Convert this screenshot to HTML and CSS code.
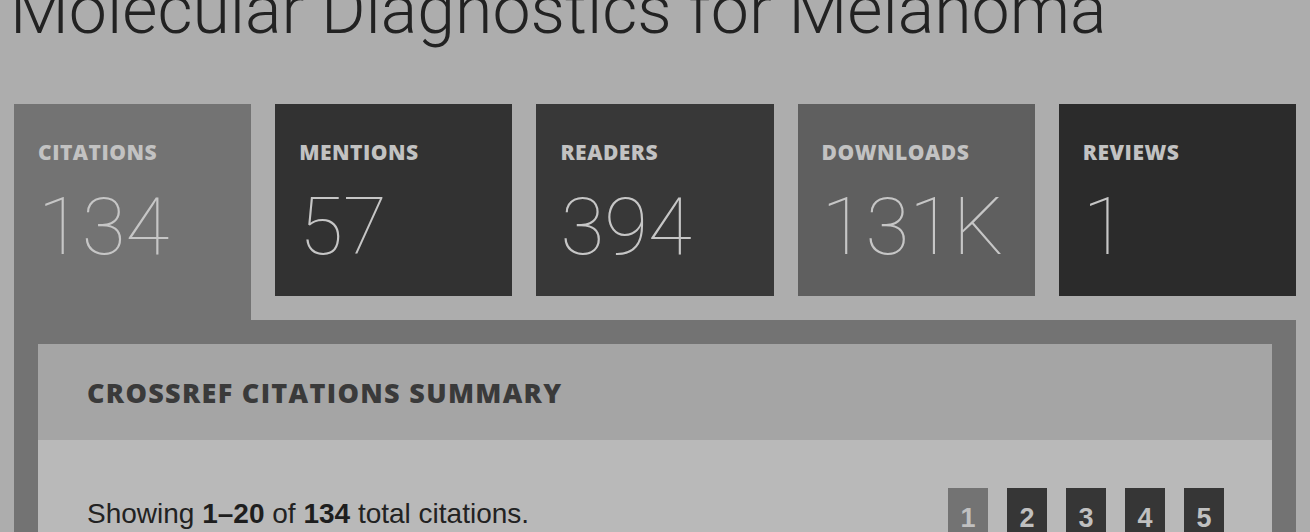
FILE: index.html
```html
<!DOCTYPE html>
<html lang="en">
<head>
<meta charset="utf-8">
<title>Molecular Diagnostics for Melanoma</title>
<link rel="stylesheet" href="styles.css">
</head>
<body>
<h1 class="title">Molecular Diagnostics for Melanoma</h1>
<div class="tabs">
  <div class="tab tab-active"><div class="tab-label">CITATIONS</div><div class="tab-num">134</div></div>
  <div class="tab tab-mentions"><div class="tab-label">MENTIONS</div><div class="tab-num">57</div></div>
  <div class="tab tab-readers"><div class="tab-label">READERS</div><div class="tab-num">394</div></div>
  <div class="tab tab-downloads"><div class="tab-label">DOWNLOADS</div><div class="tab-num">131K</div></div>
  <div class="tab tab-reviews"><div class="tab-label">REVIEWS</div><div class="tab-num">1</div></div>
</div>
<div class="panel">
  <div class="inner">
    <div class="inner-head">CROSSREF CITATIONS SUMMARY</div>
    <div class="inner-body">
      <div class="showing">Showing <b>1–20</b> of <b>134</b> total citations.</div>
      <div class="pager">
        <span class="page page-active">1</span>
        <span class="page">2</span>
        <span class="page">3</span>
        <span class="page">4</span>
        <span class="page">5</span>
      </div>
    </div>
  </div>
</div>
</body>
</html>
```
FILE: styles.css
```css
html, body {
  margin: 0;
  padding: 0;
  background: #adadad;
  overflow: hidden;
}
body {
  width: 1310px;
  height: 532px;
}
.title {
  margin: -30px 0 54px 10px;
  font-family: Roboto, "Liberation Sans", sans-serif;
  font-weight: 300;
  font-size: 68px;
  line-height: 80px;
  color: #222;
  white-space: nowrap;
}
.tabs {
  display: flex;
  gap: 24px;
  padding: 0 14px;
  align-items: flex-start;
  height: 216px;
}
.tab {
  flex: 1;
  height: 192px;
  box-sizing: border-box;
  padding: 35px 0 0 24px;
}
.tab-active { background: #737373; height: 216px; }
.tab-mentions { background: #323232; }
.tab-readers { background: #383838; }
.tab-downloads { background: #5f5f5f; }
.tab-reviews { background: #2b2b2b; }
.tab-label {
  font-family: "Open Sans", "Liberation Sans", sans-serif;
  font-weight: 800;
  font-size: 21px;
  line-height: 26px;
  letter-spacing: 0.5px;
  color: #c2c2c2;
}
.tab-num {
  margin-top: 17px;
  font-family: Roboto, "Liberation Sans", sans-serif;
  font-weight: 100;
  font-size: 80px;
  line-height: 90px;
  color: #c6c6c6;
}
.panel {
  margin: 0 14px;
  background: #737373;
  padding: 24px 24px 0;
  height: 300px;
}
.inner {
  background: #b9b9b9;
  height: 100%;
}
.inner-head {
  background: #a5a5a5;
  height: 96px;
  display: flex;
  align-items: center;
  padding-left: 49px;
  font-family: "Open Sans", "Liberation Sans", sans-serif;
  font-weight: 800;
  font-size: 27px;
  letter-spacing: 1.3px;
  color: #3a3a3a;
}
.inner-body {
  display: flex;
  justify-content: space-between;
  align-items: flex-start;
  padding: 48px 48px 0 49px;
}
.showing {
  font-family: "Liberation Sans", Arial, sans-serif;
  font-size: 28px;
  line-height: 40px;
  color: #222;
  margin-top: 6px;
}
.showing b { color: #1e1e1e; }
.pager {
  display: flex;
  gap: 19px;
}
.page {
  width: 40px;
  height: 40px;
  display: flex;
  align-items: center;
  justify-content: center;
  background: #363636;
  color: #c0c0c0;
  font-family: "Liberation Sans", Arial, sans-serif;
  font-weight: 700;
  font-size: 27px;
  padding-top: 10px;
  box-sizing: content-box;
}
.page-active { background: #737373; }
```
